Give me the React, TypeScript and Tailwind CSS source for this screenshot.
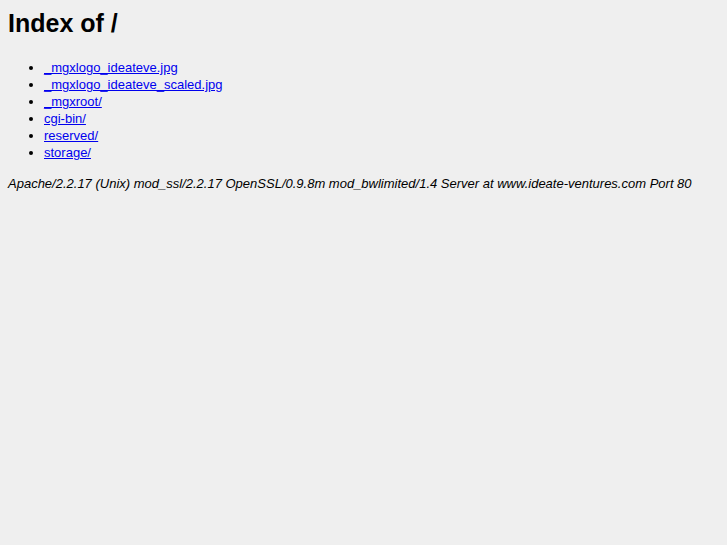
const entries = [
  '_mgxlogo_ideateve.jpg',
  '_mgxlogo_ideateve_scaled.jpg',
  '_mgxroot/',
  'cgi-bin/',
  'reserved/',
  'storage/',
];

export default function App() {
  return (
    <div
      className="min-h-[545px] bg-[#efefef] px-2 pt-2 text-[13px] text-black"
      style={{ fontFamily: '"Liberation Sans", Arial, sans-serif' }}
    >
      <h1 className="text-[25px] font-bold leading-[30px]">Index of /</h1>
      <ul className="mt-[21px] list-disc pl-[36px]">
        {entries.map((name) => (
          <li key={name} className="leading-[17px]">
            <a href={'#' + name} className="text-[#0000ee] underline">
              {name}
            </a>
          </li>
        ))}
      </ul>
      <address className="mt-[14px] italic leading-[17px]">
        Apache/2.2.17 (Unix) mod_ssl/2.2.17 OpenSSL/0.9.8m mod_bwlimited/1.4 Server at www.ideate-ventures.com Port 80
      </address>
    </div>
  );
}
